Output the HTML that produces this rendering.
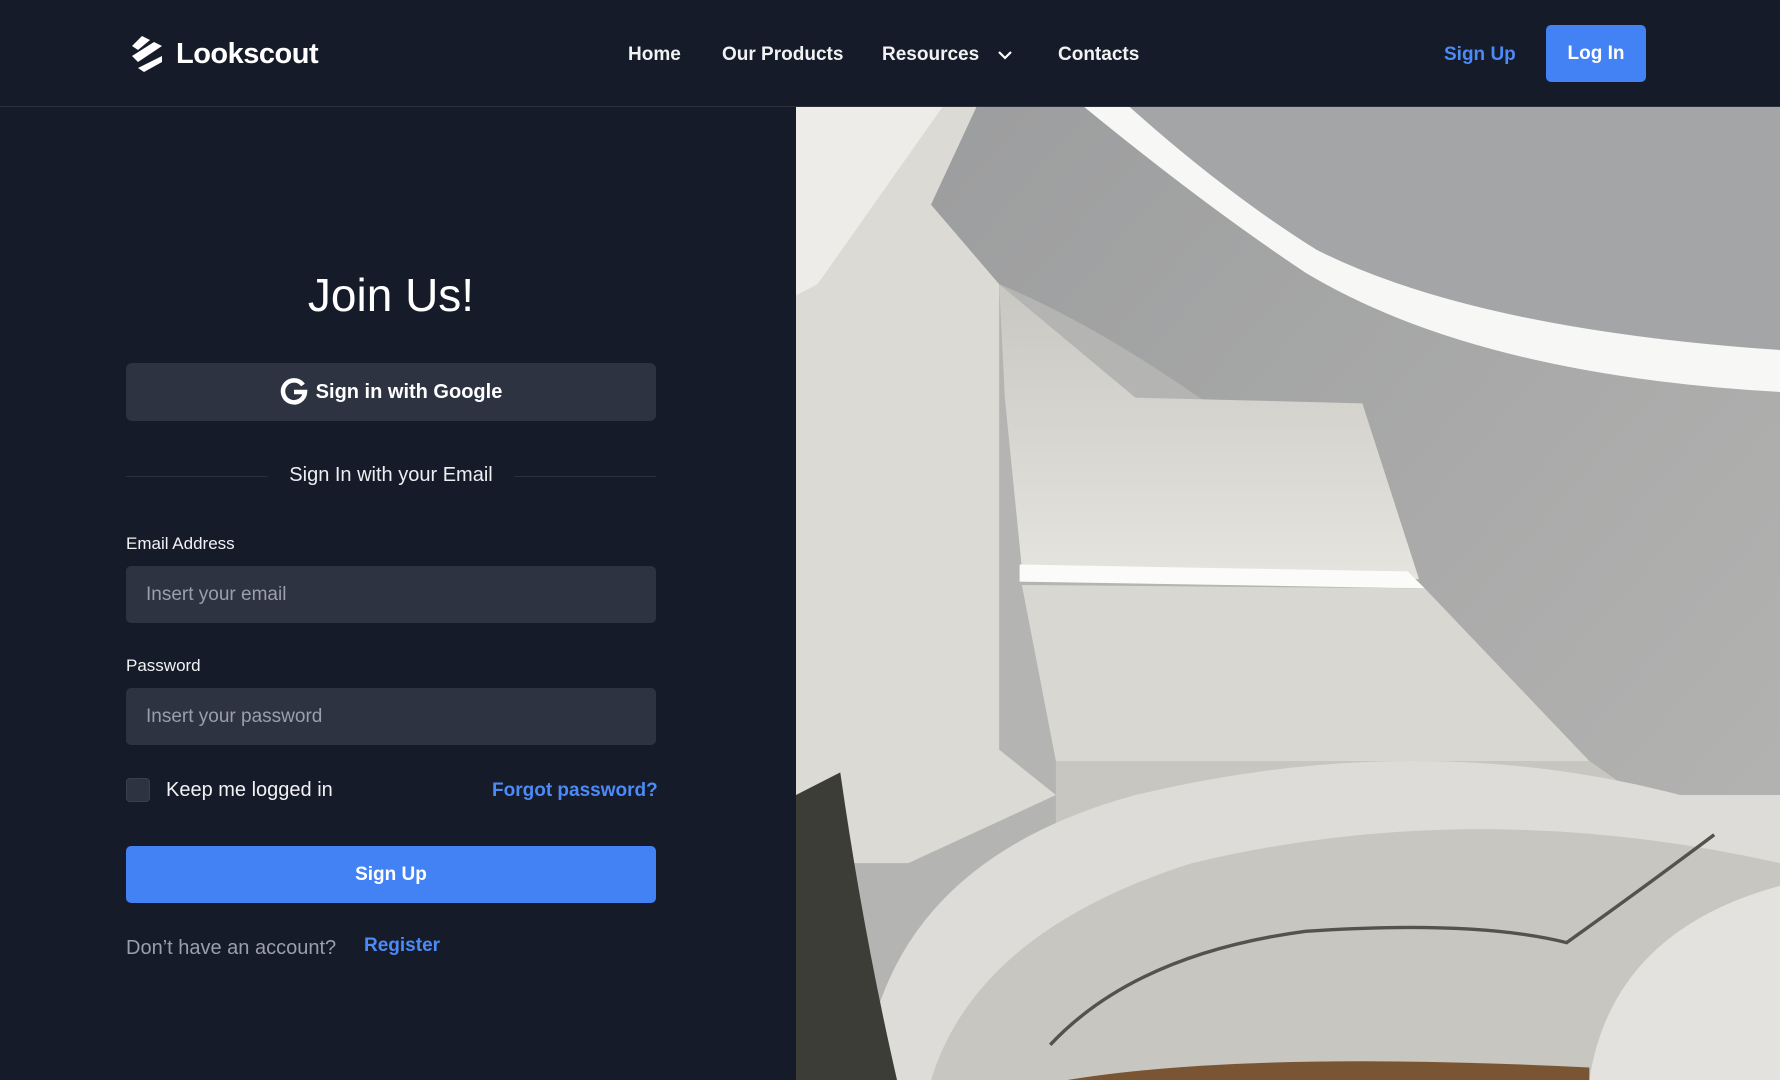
<!DOCTYPE html>
<html><head><meta charset="utf-8"><style>
*{box-sizing:border-box;margin:0;padding:0}
body{width:1780px;height:1080px;background:#161b29;font-family:"Liberation Sans",sans-serif;color:#fff;position:relative;overflow:hidden}
.a{position:absolute}
header{position:absolute;left:0;top:0;width:1780px;height:107px;border-bottom:1px solid #2b303d}
.nav{font-size:19px;font-weight:bold;top:44px;color:#f1f2f4}
.input{position:absolute;left:126px;width:530px;height:57px;background:#2e3342;border-radius:5px;font-size:19px;color:#9a9fac;padding-left:20px;line-height:57px}
.lbl{position:absolute;left:126px;font-size:17px;color:#f1f2f4}
</style></head><body>
<header>
<svg class="a" style="left:130px;top:36px" width="34" height="36" viewBox="0 0 34 36"><g fill="#fff"><path d="M12 0 L20 4 L8 14 L2 10Z"/><path d="M24 6 L32 10 L8 26 L2 20 Z"/><path d="M32 20 L32 26 L14 36 L8 32Z"/></g></svg>
<div class="a" style="left:176px;top:38px;font-size:29px;font-weight:bold;letter-spacing:-0.5px">Lookscout</div>
<div class="a nav" style="left:628px">Home</div>
<div class="a nav" style="left:722px">Our Products</div>
<div class="a nav" style="left:882px">Resources</div>
<svg class="a" style="left:997px;top:49px" width="16" height="12" viewBox="0 0 16 12"><path d="M2 3 L8 9 L14 3" stroke="#fff" stroke-width="2.2" fill="none"/></svg>
<div class="a nav" style="left:1058px">Contacts</div>
<div class="a nav" style="left:1444px;color:#4b8af7">Sign Up</div>
<div class="a" style="left:1546px;top:25px;width:100px;height:57px;background:#4382f5;border-radius:5px;font-size:19px;font-weight:bold;text-align:center;line-height:57px">Log In</div>
</header>
<div class="a" style="left:126px;width:530px;top:268px;text-align:center;font-size:46px">Join Us!</div>
<div class="a" style="left:126px;top:363px;width:530px;height:58px;background:#2e3342;border-radius:6px;text-align:center;line-height:58px;font-size:20px;font-weight:bold">
<svg style="vertical-align:middle;margin-right:8px;margin-top:-4px" width="28" height="28" viewBox="0 0 28 28"><path d="M23 8 A11 11 0 1 0 25 15 L14 15" stroke="#fff" stroke-width="4.5" fill="none"/></svg>Sign in with Google</div>
<div class="a" style="left:126px;top:476px;width:142px;height:1px;background:#2b303d"></div>
<div class="a" style="left:514px;top:476px;width:142px;height:1px;background:#2b303d"></div>
<div class="a" style="left:126px;width:530px;top:464px;text-align:center;font-size:20px;color:#eceef2">Sign In with your Email</div>
<div class="lbl" style="top:534px">Email Address</div>
<div class="input" style="top:566px">Insert your email</div>
<div class="lbl" style="top:656px">Password</div>
<div class="input" style="top:688px">Insert your password</div>
<div class="a" style="left:126px;top:778px;width:24px;height:24px;background:#2e3342;border-radius:4px;border:1px solid #3a3f4d"></div>
<div class="a" style="left:166px;top:779px;font-size:20px;color:#f1f2f4">Keep me logged in</div>
<div class="a" style="left:492px;top:780px;font-size:19px;font-weight:bold;color:#4b8af7">Forgot password?</div>
<div class="a" style="left:126px;top:846px;width:530px;height:57px;background:#4382f5;border-radius:5px;text-align:center;line-height:57px;font-size:19px;font-weight:bold">Sign Up</div>
<div class="a" style="left:126px;top:937px;font-size:20px;color:#9a9fac">Don’t have an account?</div>
<div class="a" style="left:364px;top:935px;font-size:19px;font-weight:bold;color:#4b8af7">Register</div>
<svg class="a" style="left:796px;top:107px" width="984" height="973" viewBox="701 94 867 857" preserveAspectRatio="none">
<defs><linearGradient id="g1" x1="0" y1="0" x2="1" y2="1"><stop offset="0" stop-color="#9c9d9e"/><stop offset="1" stop-color="#b6b6b4"/></linearGradient>
<linearGradient id="g2" x1="0" y1="0" x2="0" y2="1"><stop offset="0" stop-color="#c9c7c2"/><stop offset="1" stop-color="#e6e4df"/></linearGradient></defs>
<rect x="701" y="94" width="867" height="857" fill="#b4b4b2"/>
<path d="M701 94 L860 94 L820 180 L880 250 L880 660 L930 700 L800 760 L701 760Z" fill="#dcdad5"/>
<path d="M701 94 L830 94 L720 250 L701 260Z" fill="#eeece8"/>
<path d="M860 94 L960 94 Q1060 180 1160 230 Q1300 300 1568 315 L1568 951 L1480 951 Q1400 700 1300 600 Q1200 460 1150 420 Q1000 300 880 250 L820 180Z" fill="url(#g1)"/>
<path d="M960 94 L1568 94 L1568 310 Q1300 300 1160 220 Q1060 160 990 94Z" fill="#a4a5a7"/>
<path d="M955 94 L995 94 Q1080 170 1160 220 Q1300 290 1568 308 L1568 345 Q1300 330 1150 240 Q1060 180 955 94Z" fill="#f7f7f6"/>
<path d="M880 250 L1000 350 L1200 355 L1250 510 L900 500 L885 350Z" fill="url(#g2)"/>
<path d="M898 497 L1240 503 L1255 518 L898 512Z" fill="#fbfbfa"/>
<path d="M900 515 L1255 518 L1400 670 L930 670Z" fill="#d9d7d2"/>
<path d="M930 670 L1400 670 L1500 740 L1568 760 L1568 951 L790 951 Q840 800 930 750Z" fill="#c8c6c1"/>
<path d="M760 951 Q780 760 1000 700 Q1250 640 1480 700 L1568 700 L1568 760 Q1300 700 1050 760 Q860 820 820 951Z" fill="#dedcd8"/>
<path d="M701 700 L740 680 Q760 820 790 951 L701 951Z" fill="#3d3d38"/>
<path d="M1400 951 Q1420 820 1568 780 L1568 951Z" fill="#e4e2de"/>
<path d="M940 951 Q1100 925 1400 940 L1400 951Z" fill="#7a5534"/>
<path d="M925 920 Q1000 840 1150 820 Q1300 810 1380 830 Q1450 780 1510 735" stroke="#55524c" stroke-width="3" fill="none"/>
</svg>
</body></html>
